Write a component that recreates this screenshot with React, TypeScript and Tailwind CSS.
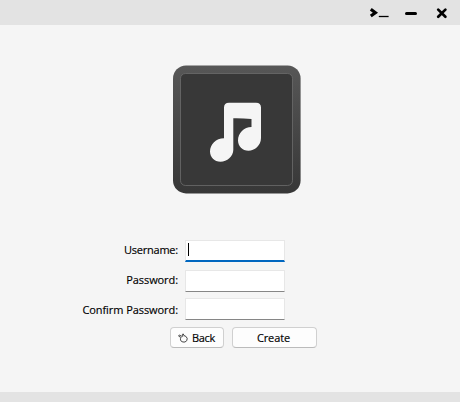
import React from "react";

function TitleBar() {
  return (
    <header className="flex h-[25px] shrink-0 items-start justify-end bg-[#e3e3e3] pr-[12px]">
      <button aria-label="Console" className="h-[25px] w-[22px]">
        <svg width="22" height="25" viewBox="0 0 22 25" fill="none" stroke="#000">
          <path d="M2.8 9.3 L7.4 12.7 L2.8 16" strokeWidth="3.1" />
          <path d="M10.8 16.5 H20.6" strokeWidth="1.3" />
        </svg>
      </button>
      <button aria-label="Minimize" className="ml-[14px] h-[25px] w-[14px]">
        <svg width="14" height="25" viewBox="0 0 14 25" fill="none" stroke="#000">
          <path d="M2.5 13.5 H11.5" strokeWidth="3" strokeLinecap="round" />
        </svg>
      </button>
      <button aria-label="Close" className="ml-[18px] h-[25px] w-[12px]">
        <svg width="12" height="25" viewBox="0 0 12 25" fill="none" stroke="#000">
          <path d="M2.2 9.6 L9.4 16.8 M9.4 9.6 L2.2 16.8" strokeWidth="2.7" strokeLinecap="round" />
        </svg>
      </button>
    </header>
  );
}

function MusicLogo() {
  return (
    <svg className="ml-[173px] mt-[40px] block shrink-0" width="128" height="129" viewBox="0 0 128 129">
      <defs>
        <linearGradient id="frame" x1="0" y1="0" x2="0" y2="1">
          <stop offset="0" stopColor="#575757" />
          <stop offset="1" stopColor="#373737" />
        </linearGradient>
      </defs>
      <rect x="0" y="0.4" width="127.6" height="128" rx="13" fill="url(#frame)" />
      <rect x="7.5" y="8.5" width="112" height="112" rx="5" fill="#383838" stroke="#6c6c6c" strokeWidth="0.8" />
      <path
        fill="#f5f5f5"
        d="M51 42.5 Q51 37.7 56 37.7 H83 Q88 37.7 88 42.5 V73 C88 80.5 81.5 85.8 75.5 85.8 C69.5 85.8 65 81.2 65 75.5 C65 68 71 62 78.5 62 V54 Q69 53 60.3 53.2 V85 C60.3 91.5 54 96.8 47.5 96.8 C41.5 96.8 37 92.3 37 86.5 C37 79.5 43 73.2 51 73.2 Z"
      />
    </svg>
  );
}

type FieldProps = { label: string; labelClass: string; focused?: boolean };

function Field({ label, labelClass, focused = false }: FieldProps) {
  return (
    <label className="flex h-[22px] items-start">
      <span className={`w-[178px] whitespace-nowrap text-right ${labelClass}`}>{label}</span>
      <span
        className={
          focused
            ? "ml-[7px] h-[22px] w-[100px] border border-b-2 border-[#e7e7e7] border-b-[#0067c0] bg-white pl-[2px] pt-[2px]"
            : "ml-[7px] h-[22px] w-[100px] rounded-[1px] border border-[#e7e7e7] border-b-[#868686] bg-white"
        }
      >
        {focused && <span className="block h-[13px] w-px bg-black" />}
      </span>
    </label>
  );
}

function HandIcon() {
  return (
    <svg width="10" height="10" viewBox="0 0 10 10" fill="none" stroke="#3c3c3c" strokeWidth="0.95" strokeLinejoin="round">
      <path d="M4.6 3.6 L1.3 2.1 Q0.3 2.3 0.9 3.3 L3.2 4.6 L2.5 5.4 V6.9 L3.4 8.4 L5 9 H7 L8.8 7.6 L9.2 5.3 L7.9 3.4 L6 2.6 L5.2 0.9 L4.4 1.4 L4.9 3.3" />
    </svg>
  );
}

export default function App() {
  return (
    <div className="flex h-[402px] w-[460px] flex-col overflow-hidden bg-[#f5f5f5] font-['Open_Sans','Noto_Sans',sans-serif] text-[11px] font-medium leading-[16px] text-black [-webkit-text-stroke:0.15px_black]">
      <TitleBar />
      <main className="flex flex-1 flex-col">
        <MusicLogo />
        <form className="mt-[46px] flex flex-col">
          <Field label="Username:" labelClass="pt-[2px] tracking-[-0.22px]" focused />
          <div className="mt-[8px]"><Field label="Password:" labelClass="pt-[2px] tracking-[-0.08px]" /></div>
          <div className="mt-[6px]"><Field label="Confirm Password:" labelClass="pt-[4px] tracking-[-0.07px]" /></div>
          <div className="ml-[170px] mt-[7px] flex gap-[8px]">
            <button type="button" className="flex h-[21px] w-[54px] items-center justify-center gap-[4px] rounded-[4px] border border-[#d0d0d0] border-b-[#bbb] bg-[#fdfdfd] pr-[1px]">
              <HandIcon />
              <span className="tracking-[-0.3px]">Back</span>
            </button>
            <button type="button" className="h-[21px] w-[85px] rounded-[4px] border border-[#d0d0d0] border-b-[#bbb] bg-[#fdfdfd]">
              <span className="flex items-center justify-center pr-[2px] tracking-[-0.1px]">Create</span>
            </button>
          </div>
        </form>
      </main>
      <footer className="h-[10px] shrink-0 bg-[#e3e3e3]" />
    </div>
  );
}
